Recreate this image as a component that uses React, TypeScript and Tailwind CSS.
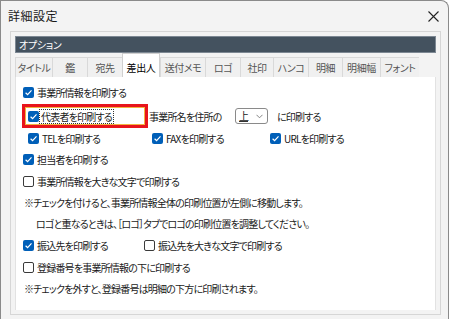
import React from "react"

const TABS = [
  { label: "タイトル", w: 37 },
  { label: "鑑", w: 35 },
  { label: "宛先", w: 35 },
  { label: "差出人", w: 38, active: true },
  { label: "送付メモ", w: 45 },
  { label: "ロゴ", w: 35 },
  { label: "社印", w: 33 },
  { label: "ハンコ", w: 35 },
  { label: "明細", w: 34 },
  { label: "明細幅", w: 38 },
  { label: "フォント", w: 39 },
]

function Check({ checked }: { checked?: boolean }) {
  if (checked)
    return (
      <span className="w-[11px] h-[11px] rounded-[2px] bg-[#005fb8] flex items-center justify-center shrink-0">
        <svg width="9" height="9" viewBox="0 0 9 9">
          <path d="M1.6 4.7 L3.6 6.6 L7.5 2.4" stroke="white" strokeWidth="1.2" fill="none" />
        </svg>
      </span>
    )
  return <span className="w-[11px] h-[11px] rounded-[2px] border border-[#3a3a3a] bg-white shrink-0" />
}

function Item({ checked, label, className = "" }: { checked?: boolean; label: string; className?: string }) {
  return (
    <div className={`flex items-center gap-[3px] ${className}`}>
      <Check checked={checked} />
      <span>{label}</span>
    </div>
  )
}

export default function App() {
  return (
    <div
      className="w-[449px] h-[319px] bg-[#f3f3f3] border-l border-t border-r border-[#8a8a8a] rounded-tr-[8px] text-[#1a1a1a] [font-feature-settings:'palt'] overflow-hidden"
      style={{ fontFamily: '"Noto Sans CJK JP", "Noto Sans", sans-serif' }}
    >
      {/* title bar */}
      <div className="h-[30px] flex items-center justify-between pl-[7px] pr-[8px]">
        <span className="text-[12px] tracking-[0.5px]">詳細設定</span>
        <svg width="11" height="11" viewBox="0 0 11 11" className="mr-[1px]">
          <path d="M0.5 0.5 L10.5 10.5 M10.5 0.5 L0.5 10.5" stroke="#222" strokeWidth="1.1" />
        </svg>
      </div>

      {/* group box */}
      <div className="ml-[9px] w-[431px] h-[284px] border border-[#d6d6d6] px-[4px] pt-[4px]">
        <div className="h-[17px] bg-[#44525f] border border-[#7d8893] flex items-center pl-[3px] text-white text-[10px] tracking-[-0.3px]">
          オプション
        </div>

        <div className="h-[24px] flex items-end tracking-[-0.4px]">
          {TABS.map(t => (
            <div
              key={t.label}
              style={{ width: t.w }}
              className={
                t.active
                  ? "h-[24px] bg-white border-l border-r border-t border-[#d0d0d0] flex items-center justify-center text-[10px] text-black pt-[3px]"
                  : "h-[20px] bg-[#f0f0f0] border-l border-t border-[#d9d9d9] flex items-center justify-center text-[10px] text-[#555]"
              }
            >
              {t.label}
            </div>
          ))}
        </div>

        <div className="h-[233px] bg-white border-l border-r border-[#e2e2e2] pt-[4px] text-[10px] tracking-[-0.8px]">
          <div className="h-[23px] flex items-center pl-[7px]">
            <Item checked label="事業所情報を印刷する" />
          </div>

          <div className="h-[24px] flex items-center pl-[6px]">
            <div className="w-[126px] h-[24px] border-[3px] border-[#e8141c] shrink-0">
              <div className="h-full border border-[#f2b441] flex items-center pl-[2px] gap-[1px]">
                <Check checked />
                <span className="outline outline-1 outline-dotted outline-[#333] px-[1px] leading-[13px]">代表者を印刷する</span>
              </div>
            </div>
            <span className="ml-[1px] w-[86px]">事業所名を住所の</span>
            <div className="w-[33px] h-[16px] border border-[#8a8a8a] rounded-[3px] bg-white flex items-center justify-between pl-[3px] pr-[4px]">
              <span className="border-b border-[#333] leading-[11px]">上</span>
              <svg width="7" height="5" viewBox="0 0 7 5">
                <path d="M0.5 0.8 L3.5 3.8 L6.5 0.8" stroke="#777" strokeWidth="0.9" fill="none" />
              </svg>
            </div>
            <span className="ml-[9px]">に印刷する</span>
          </div>

          <div className="h-[20px] flex items-center pl-[12px]">
            <Item checked label="TELを印刷する" className="w-[124px]" />
            <Item checked label="FAXを印刷する" className="w-[118px]" />
            <Item checked label="URLを印刷する" />
          </div>

          <div className="h-[22px] flex items-center pl-[7px]">
            <Item checked label="担当者を印刷する" />
          </div>
          <div className="h-[22px] flex items-center pl-[7px]">
            <Item label="事業所情報を大きな文字で印刷する" />
          </div>
          <div className="h-[21px] flex items-center pl-[8px]">
            ※チェックを付けると、事業所情報全体の印刷位置が左側に移動します。
          </div>
          <div className="h-[21px] flex items-center pl-[20px]">
            ロゴと重なるときは、［ロゴ］タブでロゴの印刷位置を調整してください。
          </div>
          <div className="h-[22px] flex items-center pl-[7px]">
            <Item checked label="振込先を印刷する" className="w-[121px]" />
            <Item label="振込先を大きな文字で印刷する" />
          </div>
          <div className="h-[22px] flex items-center pl-[7px]">
            <Item label="登録番号を事業所情報の下に印刷する" />
          </div>
          <div className="h-[21px] flex items-center pl-[8px]">
            ※チェックを外すと、登録番号は明細の下方に印刷されます。
          </div>
        </div>
      </div>
    </div>
  )
}
